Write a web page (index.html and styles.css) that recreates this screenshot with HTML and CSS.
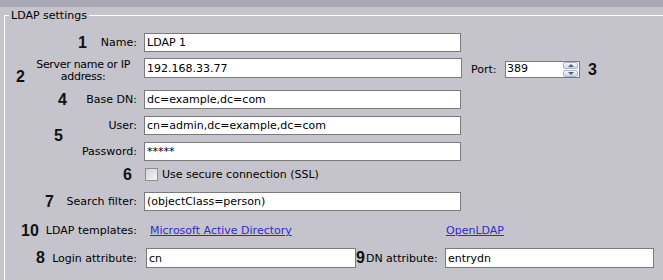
FILE: index.html
```html
<!DOCTYPE html>
<html>
<head>
<meta charset="utf-8">
<title>LDAP settings</title>
<link rel="stylesheet" href="styles.css">
</head>
<body>
<div class="topbar"></div>
<fieldset class="group">
  <legend class="group-title">LDAP settings</legend>
  <div class="form">
    <div class="row row-name">
      <span class="num num-1">1</span>
      <label class="lbl" for="f-name">Name:</label>
      <input id="f-name" class="field field-wide" type="text" value="LDAP 1">
    </div>

    <div class="row row-server">
      <span class="num num-2">2</span>
      <label class="lbl lbl-two" for="f-server">Server name or IP<br>address:</label>
      <div class="server-line">
        <input id="f-server" class="field field-server" type="text" value="192.168.33.77">
        <label class="port-lbl" for="f-port">Port:</label>
        <div class="spin">
          <span class="spin-val" id="f-port">389</span>
          <span class="spin-btns">
            <span class="spin-btn spin-up"><span class="arrow-up"></span></span>
            <span class="spin-btn spin-down"><span class="arrow-down"></span></span>
          </span>
        </div>
        <span class="num-inline num-3">3</span>
      </div>
    </div>

    <div class="row row-base">
      <span class="num num-4">4</span>
      <label class="lbl" for="f-base">Base DN:</label>
      <input id="f-base" class="field field-wide" type="text" value="dc=example,dc=com">
    </div>

    <div class="row row-user">
      <span class="num num-5">5</span>
      <label class="lbl" for="f-user">User:</label>
      <input id="f-user" class="field field-wide" type="text" value="cn=admin,dc=example,dc=com">
    </div>

    <div class="row row-pw">
      <label class="lbl" for="f-pw">Password:</label>
      <input id="f-pw" class="field field-wide field-pw" type="text" value="*****">
    </div>

    <div class="row row-check">
      <span class="num num-6">6</span>
      <span class="lbl"></span>
      <label class="check-line"><input class="check" type="checkbox"><span>Use secure connection (SSL)</span></label>
    </div>

    <div class="row row-search">
      <span class="num num-7">7</span>
      <label class="lbl" for="f-search">Search filter:</label>
      <input id="f-search" class="field field-wide" type="text" value="(objectClass=person)">
    </div>

    <div class="row row-tpl">
      <span class="num num-10">10</span>
      <span class="lbl">LDAP templates:</span>
      <div class="tpl-links">
        <a class="link" href="#">Microsoft Active Directory</a>
        <a class="link" href="#">OpenLDAP</a>
      </div>
    </div>

    <div class="row row-login">
      <span class="num num-8">8</span>
      <label class="lbl" for="f-login">Login attribute:</label>
      <div class="login-line">
        <input id="f-login" class="field field-login" type="text" value="cn">
        <label class="dn-lbl" for="f-dn"><span class="num-inline">9</span>DN attribute:</label>
        <input id="f-dn" class="field field-dn" type="text" value="entrydn">
      </div>
    </div>
  </div>
</fieldset>
</body>
</html>
```

FILE: styles.css
```css
html, body {
  margin: 0;
  padding: 0;
  overflow: hidden;
}

body {
  width: 663px;
  height: 280px;
  background: #c5c4cc;
  font-family: "DejaVu Sans", Verdana, sans-serif;
  font-size: 11px;
  color: #000;
}

.topbar {
  height: 7px;
  background: #a9a7b4;
}

.group {
  margin: 2px 0 0 4px;
  padding: 11px 0 0 0;
  border: 0;
  border-top: 1px solid #ffffff;
  border-left: 1px solid #ffffff;
  width: 659px;
  height: 271px;
  box-sizing: border-box;
  min-width: 0;
  overflow: hidden;
}

.group-title {
  margin-left: 4px;
  padding: 0 2px;
  line-height: 13px;
  font-size: 11px;
}

.form {
  display: flex;
  flex-direction: column;
}

.row {
  position: relative;
  display: grid;
  grid-template-columns: 132px auto;
  column-gap: 7px;
  align-items: center;
  justify-content: start;
}

.lbl {
  justify-self: end;
  white-space: nowrap;
  line-height: 13px;
}

.lbl-two {
  text-align: center;
  line-height: 12px;
  margin-right: 7px;
  letter-spacing: -0.3px;
  align-self: start;
  margin-top: 1px;
}

.num {
  position: absolute;
  top: 50%;
  transform: translateY(-50%);
  font-family: "Liberation Sans", Arial, sans-serif;
  font-weight: bold;
  font-size: 16px;
  line-height: 16px;
  color: #111;
}

.num-inline {
  font-family: "Liberation Sans", Arial, sans-serif;
  font-weight: bold;
  font-size: 16px;
  line-height: 16px;
  color: #111;
}

.num-1 { left: 73px; }
.num-2 { left: 11px; top: 11px; transform: none; }
.num-4 { left: 53px; }
.num-5 { left: 49px; top: auto; bottom: -9px; transform: none; }
.num-6 { left: 118px; }
.num-7 { left: 40px; }
.num-10 { left: 16px; }
.num-8 { left: 31px; }

.field {
  box-sizing: border-box;
  height: 19px;
  margin: 0;
  padding: 0 2px;
  border: 1px solid #7b7b7b;
  border-radius: 0;
  background: #fff;
  font-family: "DejaVu Sans", Verdana, sans-serif;
  font-size: 11px;
  color: #000;
  outline: none;
}

.field-wide { width: 317px; }

/* rows vertical rhythm */
.row-name { height: 19px; }

.row-server {
  margin-top: 6px;
  height: 27px;
  align-items: start;
}

.server-line {
  display: flex;
  align-items: flex-start;
}

.field-server {
  width: 318px;
  height: 20px;
}

.port-lbl {
  margin: 5px 0 0 9px;
  width: 34px;
  line-height: 13px;
}

.spin {
  box-sizing: border-box;
  margin-top: 3px;
  width: 75px;
  height: 17px;
  border: 1px solid #7b7b7b;
  background: #fff;
  display: flex;
  justify-content: space-between;
  align-items: stretch;
}

.spin-val {
  padding-left: 1px;
  line-height: 14px;
}

.spin-btns {
  width: 15px;
  margin-right: 1px;
  display: flex;
  flex-direction: column;
  justify-content: space-between;
}

.spin-btn {
  box-sizing: border-box;
  height: 7px;
  border: 1px solid #aab6cc;
  border-radius: 2px;
  background: linear-gradient(#f2f5fb, #cfd9ea);
  display: flex;
  align-items: center;
  justify-content: center;
}

.arrow-up {
  width: 0;
  height: 0;
  border-left: 3px solid transparent;
  border-right: 3px solid transparent;
  border-bottom: 3px solid #4d5f80;
}

.arrow-down {
  width: 0;
  height: 0;
  border-left: 3px solid transparent;
  border-right: 3px solid transparent;
  border-top: 3px solid #4d5f80;
}

.num-3 {
  margin: 4px 0 0 8px;
}

.row-base { margin-top: 5px; height: 19px; }
.row-user { margin-top: 7px; height: 19px; }
.row-pw { margin-top: 7px; height: 19px; }

.row-check { margin-top: 7px; height: 13px; }

.check-line {
  display: flex;
  align-items: center;
  gap: 4px;
  line-height: 13px;
}

.check {
  appearance: none;
  -webkit-appearance: none;
  box-sizing: border-box;
  width: 13px;
  height: 13px;
  margin: 0 0 0 1px;
  border: 1px solid #8c8c8c;
  background: linear-gradient(135deg, #d2d2d4, #f7f7f7);
}

.row-search { margin-top: 11px; height: 19px; }

.row-tpl { margin-top: 10px; height: 19px; }

.tpl-links {
  display: grid;
  grid-template-columns: 296px auto;
  padding-left: 6px;
  line-height: 13px;
}

.link {
  color: #2d2dc8;
  text-decoration: underline;
  justify-self: start;
}

.row-login {
  margin-top: 8px;
  height: 20px;
  column-gap: 9px;
}

.login-line {
  display: flex;
  align-items: center;
}

.field-login {
  width: 210px;
  height: 20px;
}

.dn-lbl {
  width: 89px;
  display: flex;
  align-items: center;
  gap: 1px;
  line-height: 13px;
}

.field-dn {
  width: 209px;
  height: 20px;
}
```
